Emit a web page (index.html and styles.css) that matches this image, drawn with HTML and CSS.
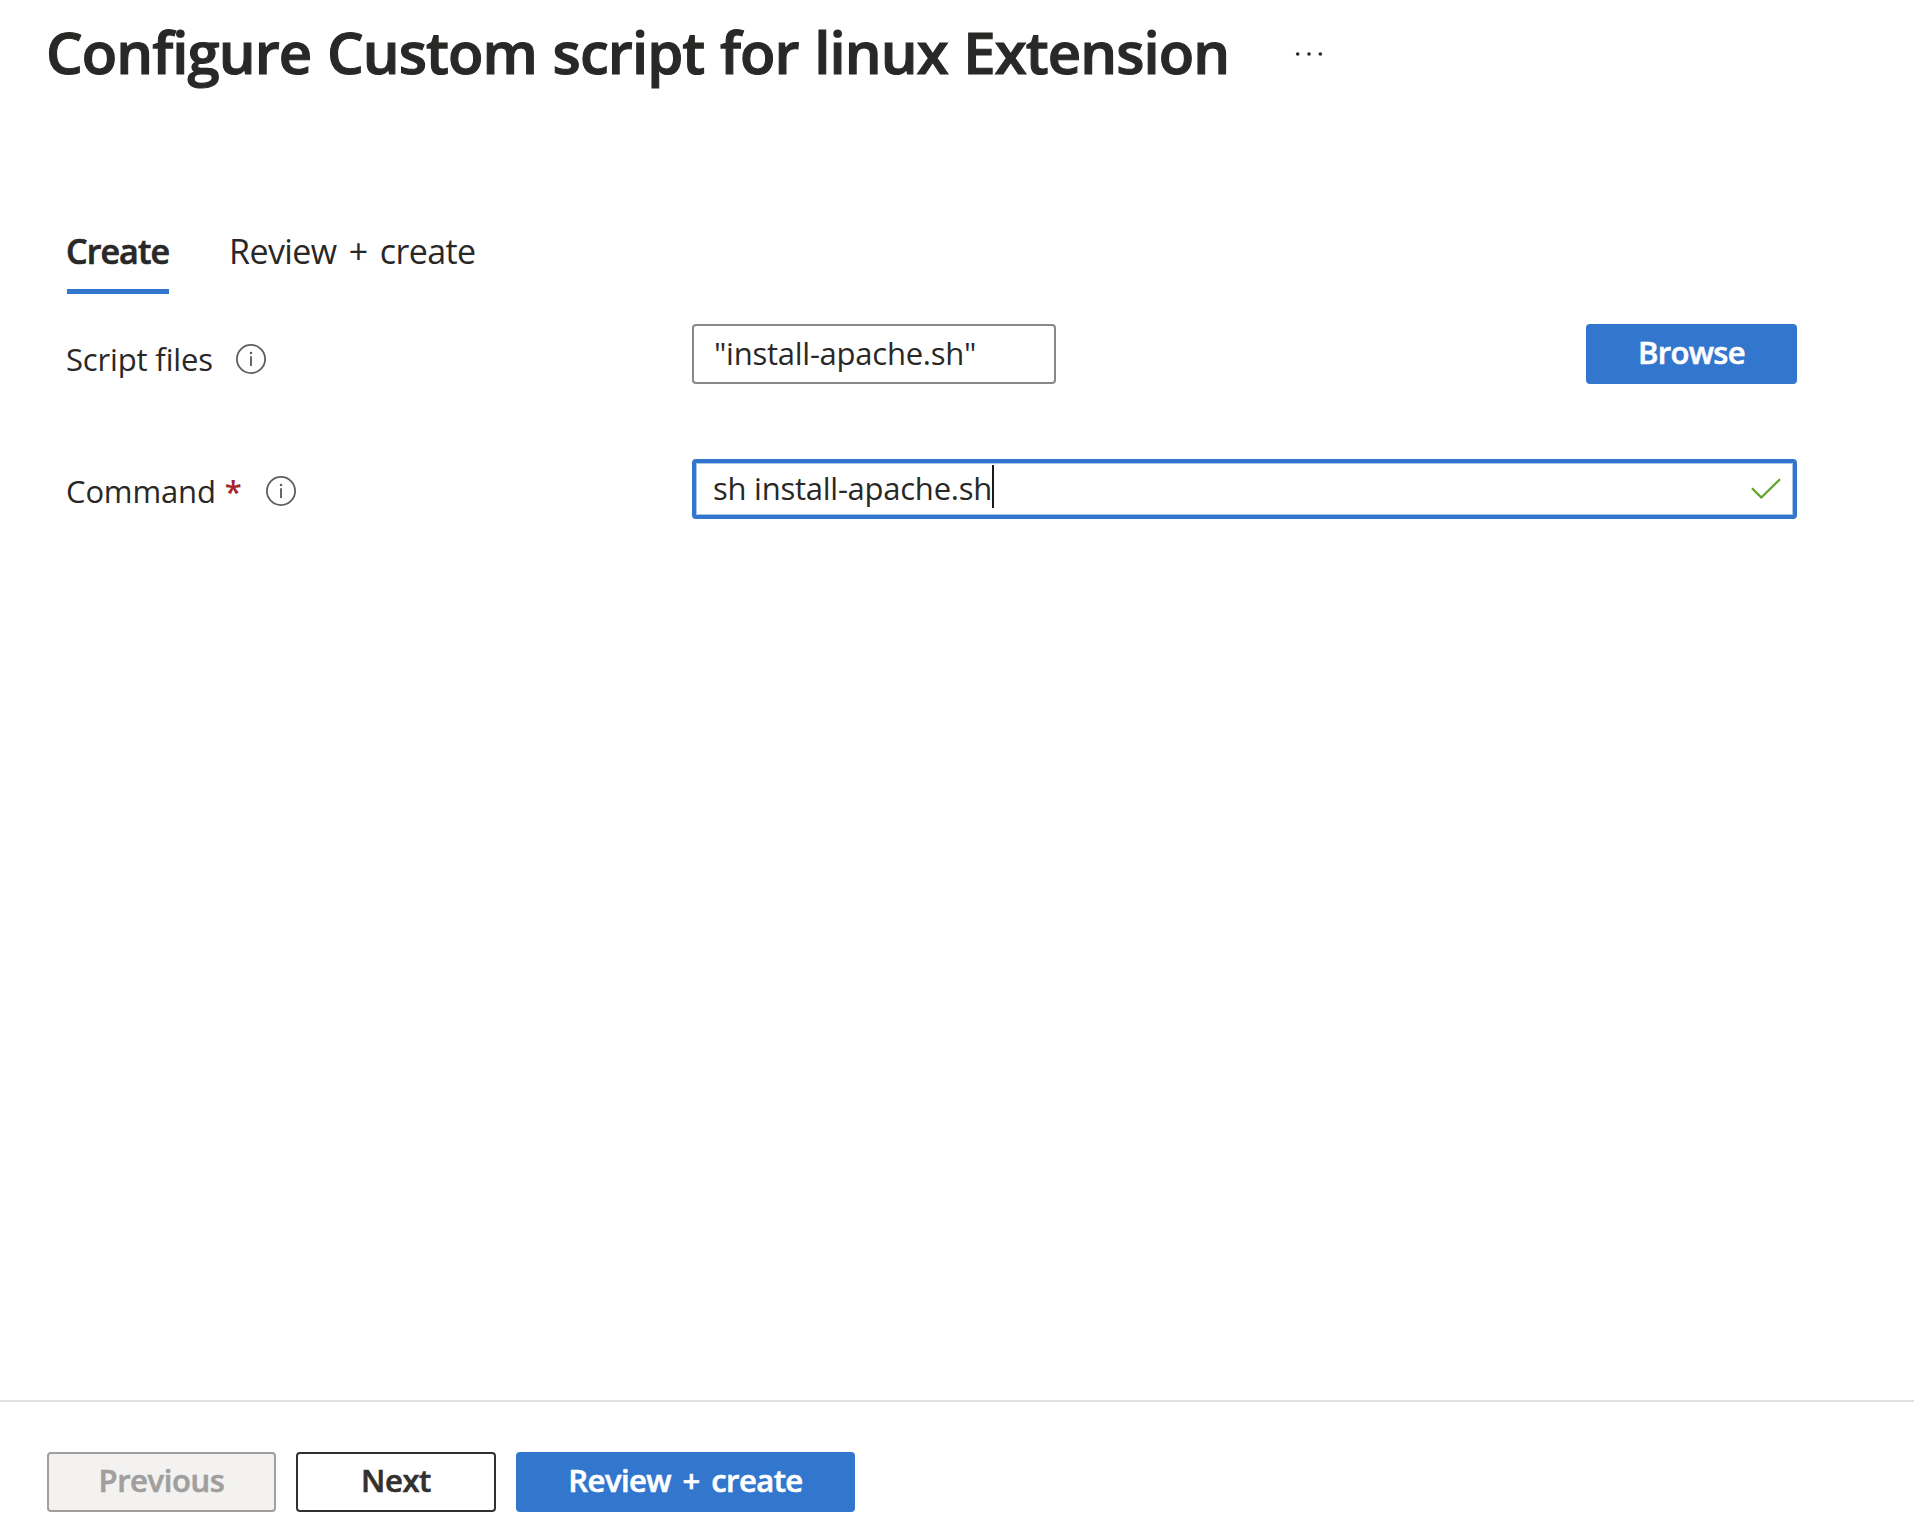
FILE: index.html
```
<!DOCTYPE html>
<html lang="en">
<head>
<meta charset="utf-8">
<title>Configure Custom script for linux Extension</title>
<link rel="stylesheet" href="styles.css">
</head>
<body>
<div class="blade">
  <header class="header">
    <h1 class="title">Configure Custom script for linux Extension</h1>
    <svg class="more" width="30" height="8" viewBox="0 0 30 8" fill="#292827"><circle cx="3.7" cy="4" r="1.8"/><circle cx="15" cy="4" r="1.8"/><circle cx="26.3" cy="4" r="1.8"/></svg>
  </header>

  <nav class="tabs">
    <span class="tab tab-active">Create</span>
    <span class="tab">Review + create</span>
  </nav>

  <main class="form">
    <div class="row row-files">
      <div class="label">
        <span class="label-text">Script files</span>
        <svg class="info" width="30" height="30" viewBox="0 0 30 30"><circle cx="15" cy="15" r="14.1" fill="none" stroke="#605e5c" stroke-width="1.8"/><path d="M15 12.2V22" stroke="#605e5c" stroke-width="1.9"/><circle cx="15" cy="9" r="1.25" fill="#605e5c"/></svg>
      </div>
      <div class="input input-file"><span class="value">"install-apache.sh"</span></div>
      <div class="button button-primary browse"><span>Browse</span></div>
    </div>
    <div class="row row-command">
      <div class="label">
        <span class="label-text">Command</span>
        <span class="required">*</span>
        <svg class="info" width="30" height="30" viewBox="0 0 30 30"><circle cx="15" cy="15" r="14.1" fill="none" stroke="#605e5c" stroke-width="1.8"/><path d="M15 12.2V22" stroke="#605e5c" stroke-width="1.9"/><circle cx="15" cy="9" r="1.25" fill="#605e5c"/></svg>
      </div>
      <div class="input input-focused">
        <span class="value">sh install-apache.sh</span><span class="caret"></span>
        <svg class="check" width="30" height="22" viewBox="0 0 30 22"><path d="M1 10.2 10.3 19.5 29 1.2" fill="none" stroke="#5ea226" stroke-width="2.3"/></svg>
      </div>
    </div>
  </main>

  <footer class="footer">
    <div class="button button-disabled"><span>Previous</span></div>
    <div class="button button-default"><span>Next</span></div>
    <div class="button button-primary review"><span>Review + create</span></div>
  </footer>
</div>
</body>
</html>
```
FILE: styles.css
```
* {
  box-sizing: border-box;
}

body {
  margin: 0;
  background: #fff;
  color: #292827;
  font-family: "Segoe UI", "Open Sans", sans-serif;
  font-size: 31px;
}

svg {
  display: block;
  flex: none;
}

.blade {
  display: flex;
  flex-direction: column;
  height: 1528px;
}

.header {
  display: flex;
  align-items: center;
  height: 108px;
  padding-left: 45px;
}

.title {
  width: 1184px;
  margin: 0;
  padding-bottom: 5px;
  font-size: 58px;
  font-weight: 600;
  line-height: 72px;
  letter-spacing: -0.92px;
  word-spacing: 1.5px;
  text-indent: 1px;
  white-space: nowrap;
  -webkit-text-stroke: 1.1px;
}

.more {
  margin-left: 65px;
}

.tabs {
  display: flex;
  gap: 60px;
  height: 186px;
  padding: 120px 0 0 67px;
}

.tab {
  height: 66px;
  font-size: 34px;
  line-height: 46px;
  letter-spacing: -0.6px;
  word-spacing: 4px;
  white-space: nowrap;
}

.tab-active {
  width: 102px;
  border-bottom: 5px solid #3376cd;
  font-weight: 600;
  letter-spacing: -0.9px;
  text-indent: -1px;
  -webkit-text-stroke: 0.7px;
}

.form {
  display: flex;
  flex: 1;
  flex-direction: column;
  gap: 75px;
  width: 1797px;
  padding: 30px 0 0 67px;
}

.row {
  display: flex;
  height: 60px;
}

.label {
  display: flex;
  flex: none;
  align-items: center;
  width: 625px;
  letter-spacing: -0.15px;
  text-indent: -1px;
}

.row-files .label {
  padding-top: 9px;
}

.row-command .label {
  padding-top: 3px;
}

.row-files .info {
  margin-left: 23px;
}

.row-command .info {
  margin-left: 24px;
}

.required {
  margin-left: 10px;
  color: #a4262c;
  font-weight: 600;
}

.input {
  display: flex;
  align-items: center;
  height: 60px;
  border: 2px solid #8a8886;
  border-radius: 4px;
  letter-spacing: -0.25px;
  white-space: nowrap;
}

.value {
  padding-bottom: 3px;
}

.input-file {
  width: 364px;
  padding-left: 20px;
}

.input-focused {
  flex: 1;
  padding: 0 12px 0 17px;
  border: 4px solid #3376cd;
  box-shadow: inset 0 0 0 1px #a9c6ea;
}

.caret {
  width: 2px;
  height: 43px;
  margin-bottom: 5px;
  background: #1b1a19;
}

.check {
  margin-left: auto;
}

.button {
  display: flex;
  align-items: center;
  justify-content: center;
  height: 60px;
  padding-bottom: 4px;
  border-radius: 4px;
  font-weight: 600;
  letter-spacing: -0.4px;
  white-space: nowrap;
  -webkit-text-stroke: 0.6px;
}

.button-primary {
  background: #3376cd;
  color: #fff;
}

.browse {
  width: 211px;
  margin-left: auto;
  letter-spacing: -0.7px;
}

.footer {
  display: flex;
  gap: 20px;
  height: 128px;
  padding: 50px 0 0 47px;
  border-top: 2px solid #e1e1e1;
}

.button-disabled {
  width: 229px;
  border: 2px solid #a19f9d;
  background: #f3f2f1;
  color: #a19f9d;
}

.button-default {
  width: 200px;
  border: 2px solid #323130;
  color: #323130;
}

.review {
  width: 339px;
  letter-spacing: -0.55px;
  word-spacing: 4px;
}
```
